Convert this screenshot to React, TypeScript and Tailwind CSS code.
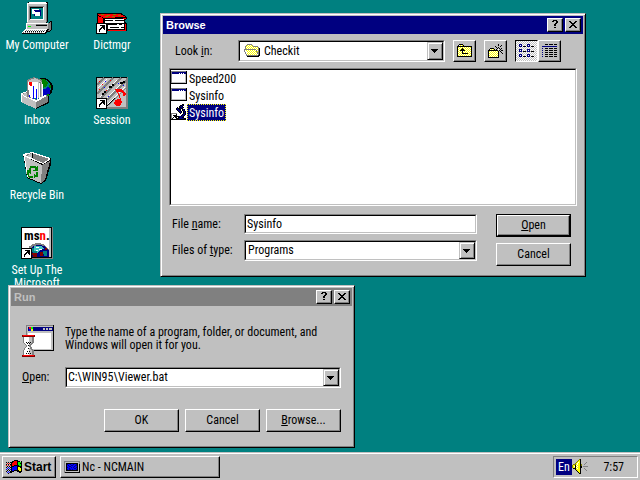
import React from "react";

const raised =
  "border border-t-white border-l-white border-r-black border-b-black bg-[#c0c0c0] shadow-[inset_-1px_-1px_0_#808080]";
const frame =
  "border border-t-[#c0c0c0] border-l-[#c0c0c0] border-r-black border-b-black bg-[#c0c0c0] shadow-[inset_1px_1px_0_#fff,inset_-1px_-1px_0_#808080]";
const sunken = "border border-t-[#808080] border-l-[#808080] border-r-white border-b-white bg-[#c0c0c0]";
const well = "border border-t-black border-l-black border-r-[#c0c0c0] border-b-[#c0c0c0] bg-white";

const palette: Record<string, string> = {
  k: "#000",
  w: "#fff",
  g: "#808080",
  c: "#c0c0c0",
  n: "#000080",
  b: "#0000ff",
  y: "#ffff00",
  r: "#ff0000",
  l: "#00ff00",
  o: "#808000",
};

// "D" is a yellow/white dither
const Pixels: React.FC<{ rows: string[]; className?: string }> = ({ rows, className }) => (
  <svg
    width={rows[0].length}
    height={rows.length}
    shapeRendering="crispEdges"
    className={`shrink-0 ${className ?? ""}`}
    aria-hidden="true"
  >
    {rows.flatMap((row, y) =>
      row.split("").map((ch, x) => {
        if (ch === ".") return null;
        const fill = ch === "D" ? ((x + y) % 2 ? "#fff" : "#ffff00") : palette[ch];
        return <rect key={`${x}-${y}`} x={x} y={y} width={1} height={1} fill={fill} />;
      })
    )}
  </svg>
);

const folderOpen = [
  "...ggggg........",
  "..gDDDDDg.......",
  ".gDDDDDDDggggg..",
  ".gwDDDDDDDDDDDg.",
  ".gDDDDDDDDDDDDgk",
  "ggggggggggggDDgk",
  "gwDwDwDwDwDwgDgk",
  "gwDDDDDDDDDDgDgk",
  ".gwDDDDDDDDDDggk",
  ".gDDDDDDDDDDDggk",
  "..gDDDDDDDDDDDgk",
  "..ggggggggggggkk",
  "...kkkkkkkkkkkk.",
  "................",
];
const folderUp = [
  "..kkkk.........",
  ".kDDDDk........",
  "kkkkkkkkkkkkkkk",
  "kDDDDDDDDDDDDDk",
  "kDDDDkDDDDDDDDk",
  "kDDDkkkDDDDDDDk",
  "kDDkkkkkDDDDDDk",
  "kDDDDkDDDDDDDDk",
  "kDDDDkDDDDDDDDk",
  "kDDDDkkkkkkDDDk",
  "kDDDDDDDDDDDDDk",
  "kDDDDDDDDDDDDDk",
  "kkkkkkkkkkkkkkk",
  "...............",
];
const folderNew = [
  "..........k....",
  "..........k..k.",
  ".......k....k..",
  "........k.k....",
  "..kkkk...k.k.k.",
  ".kDDDDk.k.w.k..",
  "kkkkkkkkkk.k.kk",
  "kDDDDDDDDDk.k..",
  "kDDDDDDDDDk..k.",
  "kDDDDDDDDDk...k",
  "kDDDDDDDDDk....",
  "kDDDDDDDDDk....",
  "kDDDDDDDDDk....",
  "kkkkkkkkkkk....",
];
const listView = [
  "nnn.....nnn....",
  "nwn.....nwn....",
  "nnn.kkk.nnn.kkk",
  "...............",
  "...............",
  "nnn.....nnn....",
  "nwn.....nwn....",
  "nnn.kkk.nnn.kkk",
  "...............",
  "...............",
  "nnn.....nnn....",
  "nwn.....nwn....",
  "nnn.kkk.nnn.kkk",
  "...............",
];
const detailView = [
  "...kkk.kkkk.kkk",
  "...............",
  "nnnnnnnnnnnnnnn",
  "...............",
  "n..kkk.kkkk.kkk",
  "...............",
  "n..kkk.kkkk.kkk",
  "...............",
  "n..kkk.kkkk.kkk",
  "...............",
  "n..kkk.kkkk.kkk",
  "...............",
  "n..kkk.kkkk.kkk",
  "...............",
];
const program = [
  "gggggggggggggggk",
  "gnnnnnnnnnnnnnnk",
  "gnnnnnnnwnwnwnnk",
  "gwwwwwwwwwwwwwck",
  "gwwwwwwwwwwwwwck",
  "gwwwwwwwwwwwwwck",
  "gwwwwwwwwwwwwwck",
  "gwwwwwwwwwwwwwck",
  "gwwwwwwwwwwwwwck",
  "gwwwwwwwwwwwwwck",
  "gwwwwwwwwwwwwwck",
  "gcccccccccccccck",
  "kkkkkkkkkkkkkkkk",
  "................",
  "................",
];
const microscope = [
  "...........kk...",
  ".........kknk...",
  "........knnk....",
  "......k.kknnk...",
  ".....knkknkk....",
  ".....knnkk.knk..",
  "......knnk.knk..",
  ".......knnk.knk.",
  "........knk.knk.",
  "gggggg...k..knk.",
  "gwwwwk.....knnk.",
  "gwkkkk....knnk..",
  "gwwkkkkknnnnk...",
  "gwkwkk.kknnkk...",
  "gkwwwkkknnnnnkk.",
  "kkkkkkkkkkkkkkk.",
];
const flag = [
  "........kkkk....",
  "......kkrrrkkk.k",
  "k.k.kkkrrrrklllk",
  ".r.r.krrrrrkllkk",
  "k.k.kkrrrrrklllk",
  "r.r.rkrrkkkkkllk",
  ".k.k.kkkbbbkkkkk",
  "k.b.kkbbbbbkyykk",
  ".b.b.kbbbbbkyyyk",
  "b.k.bkbbbbbkyyyk",
  ".k.k.kbbkkkkkyyk",
  "k.b.kkkk...kkkkk",
  ".b.bkk.......kk.",
  "..k.............",
];
const consoleIcon = [
  "gggggggggggggggg",
  "gccccccccccccccg",
  "gckkkkkkkkkkkkcg",
  "gcknbbnbbnbbnkck",
  "gckbnbbnnbbnnkck",
  "gckbbnnbbbnbbkck",
  "gcknbbbnbnbbnkck",
  "gckbbnbbbbnnbkck",
  "gcknbnnbnbbbnkck",
  "gckkkkkkkkkkkkck",
  "gcccccccccccccck",
  "gkkkkkkkkkkkkkkk",
];
const speaker = [
  ".......ok.......",
  "......oyk.......",
  ".....oyyk.......",
  "....oywyk.....g.",
  "...oywyyk....g..",
  ".oooywyyko..g...",
  "oyykwyyyko......",
  "oywkywyykk.ggggg",
  "oyykwyyykk......",
  ".kkkywyyk...g...",
  "...kyyyyk....g..",
  "....kyyyk.....g.",
  ".....kyyk.......",
  "......kyk.......",
  ".......kk.......",
  "................",
];
const question = [
  ".kkkk.",
  "kk..kk",
  "....kk",
  "...kk.",
  "..kk..",
  "..kk..",
  "......",
  "..kk..",
  "......",
  "......",
];
const cross = [
  "kk....kk",
  ".kk..kk.",
  "..kkkk..",
  "...kk...",
  "..kkkk..",
  ".kk..kk.",
  "kk....kk",
  "........",
];
const arrowDown = ["kkkkkkk.", ".kkkkk..", "..kkk...", "...k...."];

const Big: React.FC<{ children: React.ReactNode }> = ({ children }) => (
  <svg width="32" height="32" viewBox="0 0 32 32" shapeRendering="crispEdges" className="shrink-0" aria-hidden="true">
    {children}
  </svg>
);

const ShortcutMark = () => (
  <>
    <path d="M0 21h11v11H0z" fill="#000" />
    <path d="M1 22h9v9H1z" fill="#fff" />
    <path d="M4 23h5v5h-1v-1h-1v-1h-1v1h-1v1h-1v2h-1v-3h1v-1h1v-1h1v-1H4z" fill="#000" />
  </>
);

const ComputerIcon = () => (
  <Big>
    <g transform="translate(1 0)">
      <path d="M5 1l2-1h18l1 1v18l-2 3H5z" fill="#000" />
      <path d="M5 1h19v20H5z" fill="#c0c0c0" />
      <path d="M7 0h17v1h1v1H6v18H5V1h2z" fill="#fff" />
      <path d="M24 2h1v18h-1z" fill="#808080" />
      <path d="M7 4h15v14H7z" fill="#808080" />
      <path d="M8 5h13v12H8z" fill="#000" />
      <path d="M9 6h12v11H9z" fill="#008080" />
      <path d="M21 5h1v13H8v-1h13z" fill="#fff" />
      <path d="M10 7h7v5h-7z" fill="#fff" />
      <path d="M12 8h7v6h-7z" fill="#000080" />
      <path d="M13 10h5v4h-5zM11 9h2v3h-2z" fill="#fff" />
      <path d="M4 21h22l3-2 1 1v7l-3 3H4z" fill="#000" />
      <path d="M4 21h22v6H4z" fill="#c0c0c0" />
      <path d="M4 21h23v1H5v5H4z" fill="#fff" />
      <path d="M26 21l3-1v7l-2 2h-1z" fill="#808080" />
      <path d="M14 22h11v1H14z" fill="#808080" />
      <path d="M14 23h11v1H14z" fill="#000" />
      <path d="M6 24h3v1H6z" fill="#00ff00" />
      <path d="M3 27h24l-3 5H0v-2z" fill="#000" />
      <path d="M3 27h22l-2 4H0v-1z" fill="#fff" />
      <path d="M4 28.500h20M1 30.500h20" stroke="#808080" strokeDasharray="1 1" />
      <path d="M3 29.500h20" stroke="#000" strokeDasharray="1 1" />
    </g>
  </Big>
);

const BookIcon = () => (
  <Big>
    <path d="M1 11h24l6 4v2l-2 1v2l2 2v7H9L1 23z" fill="#000" />
    <path d="M2 12h22l6 3-22 1-6-3z" fill="#f00" />
    <path d="M5 12h3v1H5zM11 13h3v1h-3zM17 12h3v1h-3zM22 13h3v1h-3zM9 14h3v1H9zM16 14h3v1h-3z" fill="#808000" />
    <path d="M2 14l5 2v5H2z" fill="#f00" />
    <path d="M9 17h19v4H9zM12 22h16v5H12z" fill="#fff" />
    <path d="M8 18.500h20M12 22.500h14M14 25.500h14" stroke="#000" strokeDasharray="9 2" />
    <path d="M27 16h3v1h-3zM12 28h18v1H12zM29 22h1v6h-1z" fill="#f00" />
    <ShortcutMark />
  </Big>
);

const InboxIcon = () => (
  <Big>
    <circle cx="22" cy="11" r="10" fill="#000" />
    <circle cx="21" cy="11" r="9" fill="#008080" />
    <path d="M16 2h7l4 4-1 3-4 2-2-3-3-2z" fill="#008000" />
    <path d="M21 12h3l2-2h3v6l-3 4-4 1z" fill="#0000c0" />
    <path d="M28 8h2v3h-2zM26 17h2v2h-2z" fill="#008000" />
    <path d="M6 3l7-3 8 3v17H6z" fill="#808080" />
    <path d="M7 4l7-3 6 3v1H7zM17 5h1v16h-1zM20 5h1v15h-1z" fill="#c0c0c0" />
    <path d="M7 5h10v17l-9-2z" fill="#fff" />
    <path d="M18 6h1v15h-1zM21 7h1v13h-1z" fill="#fff" />
    <path d="M8 5h3v4H9v-1H8z" fill="#f00" />
    <path d="M8 18h1v5H8zM12 9h1v13h-1zM15 12h1v10h-1z" fill="#0000ff" />
    <path d="M0 16l6-2v5l10 4 8-5 3 1v7l-12 6-15-7z" fill="#808080" />
    <path d="M0 17l6-1v4l4 2 5 2v8L0 25z" fill="#c0c0c0" />
    <path d="M0 16l6-2v1l-5 2 5 3v1L1 18v7H0zM7 20l8 3 9-5 2 1-11 6-8-4z" fill="#fff" />
    <path d="M27 19h1v7l-13 6v-1l12-6z" fill="#000" />
  </Big>
);

const SessionIcon = () => (
  <Big>
    <path d="M0 0h32v32H0z" fill="#808080" />
    <path d="M0 0h31v1H1v30H0z" fill="#000" />
    <path d="M1 1h29v29H1z" fill="#c0c0c0" />
    <path d="M1 8l7-7M1 17L17 1M5 21L25 1M11 23L30 4M13 29L30 12" stroke="#808080" strokeWidth="2" />
    <path d="M2 11l9-9M4 20L21 3M10 22L28 4M12 27L29 10" stroke="#fff" />
    <path d="M4 15L15 4M9 18L24 3" stroke="#808080" strokeDasharray="2 1" />
    <path d="M3 4h1v1H3zM6 7h1v1H6zM3 12h1v1H3zM10 13h1v1h-1zM14 3h1v1h-1z" fill="#f00" />
    <path d="M9 4h1v1H9zM8 10h1v1H8zM12 19h1v1h-1zM22 6h1v1h-1zM27 8h1v1h-1z" fill="#00f" />
    <path d="M16 7h2v2h-2v2h-3V9h3zM8 14h2v2H8v2H6v-2h2zM27 4h2v2h-2v1h-3V5h3z" fill="#000" />
    <path d="M11 30L30 12v18z" fill="#c0c0c0" />
    <path d="M11 29l8-8" stroke="#000" />
    <path d="M19 12h6l3 2 2 3-1 2h-2v-2l-2-2h-3l2 4 2 6-1 3-3 1h-2l-2-2 1-4 3-1h2l-2-5-3-5z" fill="#f00" />
    <ShortcutMark />
  </Big>
);

const RecycleIcon = () => (
  <Big>
    <g transform="translate(1 0)">
      <path d="M1 2l9-2 19 6v6l-5 17-5 3L5 26z" fill="#000" />
      <path d="M2 4l18 9-1 18L5 25z" fill="#c0c0c0" />
      <path d="M20 13l8-4-5 19-4 3z" fill="#808080" />
      <path d="M3 3l7-2 17 6-6 4z" fill="#808080" />
      <path d="M5 4l5-3v6z" fill="#c0c0c0" />
      <path d="M10 1h1v8l-1-1z" fill="#000" />
      <path d="M1 2l9-2 18 6v2l-7 4L1 4zM3 3l18 8 6-4-17-6z" fill="#fff" fillRule="evenodd" />
      <path d="M2 4l4 21" stroke="#fff" />
      <path d="M8 14h6v1h1v-1h1v5h-5v-1h2v-2H9v2H7v-2h1zM5 18h4v4H8v-1H7v3h4v2H7v-1H6v-2H5zM14 20h2v5h-3v1h-1v-4h1v1h1z" fill="#008000" />
    </g>
  </Big>
);

const MsnIcon = () => (
  <Big>
    <path d="M0 0h32v32H0z" fill="#808080" />
    <path d="M0 0h31v31H0z" fill="#000" />
    <path d="M1 1h29v29H1z" fill="#c0c0c0" />
    <path d="M1 1h27v28H1z" fill="#fff" />
    <clipPath id="globe">
      <path d="M6 16h22v14H6z" />
    </clipPath>
    <g clipPath="url(#globe)">
      <circle cx="17" cy="28" r="12" fill="#808080" />
      <circle cx="18" cy="29" r="11" fill="#000080" />
      <path d="M13 19h8l2 3-4 1-3 3-3-2z" fill="#40c0c0" />
      <path d="M9 21h4v3h3v2h-4zM22 24h4v5h-3z" fill="#008080" />
      <path d="M11 26h5v4h-4zM19 25h3v4h-3zM24 21h2v2h-2z" fill="#800000" />
      <path d="M15 20h3v1h-3zM18 22h3v1h-3zM15 23h2v1h-2z" fill="#fff" />
    </g>
    <text x="3" y="13" fontSize="13" fontWeight="bold" fontFamily="Roboto Condensed, Roboto, sans-serif">
      ms<tspan fill="#f00">n</tspan>.
    </text>
    <ShortcutMark />
  </Big>
);

const RunIcon = () => (
  <Big>
    <path d="M4 0h28v26H4z" fill="#000" />
    <path d="M4 0h27v25H4z" fill="#808080" />
    <path d="M5 1h26v24H5z" fill="#c0c0c0" />
    <path d="M6 2h25v4H6z" fill="#000080" />
    <path d="M7 2h2v2H7z" fill="#f00" />
    <path d="M9 2h2v2H9z" fill="#0f0" />
    <path d="M7 4h2v2H7z" fill="#00f" />
    <path d="M9 4h2v2H9z" fill="#ff0" />
    <path d="M21 3h2v2h-2zM24 3h2v2h-2zM27 3h3v2h-3z" fill="#c0c0c0" />
    <path d="M6 8h23v16H6z" fill="#fff" />
    <path d="M1 11h11v6l-3 4 3 5v4H1v-4l3-5-3-4z" fill="#808080" />
    <path d="M2 12h8v5l-3 4 3 5v4H2v-4l3-5-3-4z" fill="#fff" />
    <path d="M7 12h3v5l-3 3zM7 22l3 4v4H7z" fill="#c0c0c0" />
    <path d="M4 17.500h6M5 18.500h4M6 20.500h2M6 23.500h2M5 26.500h4M4 28.500h6" stroke="#000" strokeDasharray="1 1" />
    <path d="M0 10h13v2H0zM0 30h13v2H0z" fill="#800000" />
    <path d="M1 10h11v1H1zM1 30h11v1H1z" fill="#f00" />
  </Big>
);

const desktopItems = [
  { label: "My Computer", Icon: ComputerIcon },
  { label: "Inbox", Icon: InboxIcon },
  { label: "Recycle Bin", Icon: RecycleIcon },
  { label: "Set Up The Microsoft", Icon: MsnIcon },
  { label: "Dictmgr", Icon: BookIcon },
  { label: "Session", Icon: SessionIcon },
];

const TitleBar: React.FC<{ title: string; active?: boolean }> = ({ title, active }) => (
  <div
    className={`flex h-[18px] items-center gap-[2px] px-[2px] font-['Liberation_Sans'] text-[11px] font-bold ${
      active ? "bg-[#000080] text-white" : "bg-[#808080] text-[#c0c0c0]"
    }`}
  >
    <h2 className="flex-1 px-px">{title}</h2>
    <button aria-label="Help" className={`flex h-[14px] w-4 items-center justify-center ${raised}`}>
      <Pixels rows={question} />
    </button>
    <button aria-label="Close" className={`flex h-[14px] w-4 items-center justify-center ${raised}`}>
      <Pixels rows={cross} />
    </button>
  </div>
);

const PushButton: React.FC<{ children: React.ReactNode; isDefault?: boolean }> = ({ children, isDefault }) => (
  <button className={`h-[23px] w-[75px] ${isDefault ? "border border-black" : ""}`}>
    <span className={`flex h-full items-center justify-center ${raised}`}>
      <span>{children}</span>
    </span>
  </button>
);

const DropArrow = () => (
  <span className={`pointer-events-none flex w-4 shrink-0 items-center justify-center ${frame}`}>
    <Pixels rows={arrowDown} />
  </span>
);

const BrowseDialog = () => (
  <section aria-label="Browse" className={`absolute top-[13px] left-[160px] w-[426px] p-[2px] ${frame}`}>
    <TitleBar title="Browse" active />
    <div className="px-[6px] pt-[6px] pb-2">
      <div className="flex h-[22px] items-center pl-[6px]">
        <label htmlFor="look-in" className="w-[63px]">
          Look <u>i</u>n:
        </label>
        <div className={`h-full flex-1 ${sunken}`}>
          <div className={`flex h-full ${well}`}>
            <Pixels rows={folderOpen} className="ml-1 self-center" />
            <select id="look-in" className="min-w-0 flex-1 appearance-none bg-transparent pl-1 outline-none">
              <option>Checkit</option>
            </select>
            <DropArrow />
          </div>
        </div>
        <div className="mr-4 ml-2 flex h-full">
          <button aria-label="Up One Level" className={`mr-2 flex w-[23px] items-center justify-center ${raised}`}>
            <Pixels rows={folderUp} />
          </button>
          <button aria-label="Create New Folder" className={`mr-2 flex w-[23px] items-center justify-center ${raised}`}>
            <Pixels rows={folderNew} />
          </button>
          <button
            aria-label="List"
            className="flex w-[23px] items-center justify-center border border-t-black border-r-white border-b-white border-l-black bg-[repeating-conic-gradient(#fff_0_25%,#c0c0c0_0_50%)] bg-size-[2px_2px]"
          >
            <Pixels rows={listView} />
          </button>
          <button aria-label="Details" className={`flex w-[23px] items-center justify-center ${raised}`}>
            <Pixels rows={detailView} />
          </button>
        </div>
      </div>
      <div className={`mt-[6px] h-[138px] ${sunken}`}>
        <ul className={`h-full ${well}`}>
          <li className="flex h-[17px] items-center">
            <Pixels rows={program} />
            <button className="px-[2px] pt-[2px] leading-[15px]">Speed200</button>
          </li>
          <li className="flex h-[17px] items-center">
            <Pixels rows={program} />
            <button className="px-[2px] pt-[2px] leading-[15px]">Sysinfo</button>
          </li>
          <li className="flex h-[17px] items-start">
            <Pixels rows={microscope} />
            <button className="border border-dotted border-[#ffff00] bg-[#000080] px-px pt-[2px] text-white">
              Sysinfo
            </button>
          </li>
        </ul>
      </div>
      <div className="mt-2 flex items-start gap-[19px] pr-[6px] pl-[3px]">
        <div className="grid flex-1 grid-cols-[72px_1fr] items-center gap-y-[6px]">
          <label htmlFor="file-name">
            File <u>n</u>ame:
          </label>
          <div className={`h-[20px] ${sunken}`}>
            <input
              id="file-name"
              defaultValue="Sysinfo"
              className={`block h-full w-full px-px outline-none ${well}`}
            />
          </div>
          <label htmlFor="file-type">
            Files of <u>t</u>ype:
          </label>
          <div className={`h-[21px] ${sunken}`}>
            <div className={`flex h-full ${well}`}>
              <select id="file-type" className="min-w-0 flex-1 appearance-none bg-transparent pl-[2px] outline-none">
                <option>Programs</option>
              </select>
              <DropArrow />
            </div>
          </div>
        </div>
        <div className="flex flex-col gap-[6px]">
          <PushButton isDefault>
            <u>O</u>pen
          </PushButton>
          <PushButton>Cancel</PushButton>
        </div>
      </div>
    </div>
  </section>
);

const RunDialog = () => (
  <section aria-label="Run" className={`absolute top-[285px] left-2 w-[347px] p-[2px] ${frame}`}>
    <TitleBar title="Run" />
    <div className="px-[11px] pt-[19px] pb-[13px]">
      <div className="flex gap-[11px]">
        <RunIcon />
        <p className="pt-px">
          Type the name of a program, folder, or document, and
          <br />
          Windows will open it for you.
        </p>
      </div>
      <div className="mt-[10px] flex h-[21px] items-center">
        <label htmlFor="run-open" className="w-[43px]">
          <u>O</u>pen:
        </label>
        <div className={`h-full flex-1 ${sunken}`}>
          <div className={`flex h-full ${well}`}>
            <input
              id="run-open"
              defaultValue="C:\WIN95\Viewer.bat"
              className="min-w-0 flex-1 bg-transparent px-px outline-none"
            />
            <DropArrow />
          </div>
        </div>
      </div>
      <div className="mt-[21px] flex justify-end gap-[6px]">
        <PushButton>OK</PushButton>
        <PushButton>Cancel</PushButton>
        <PushButton>
          <u>B</u>rowse...
        </PushButton>
      </div>
    </div>
  </section>
);

const Taskbar = () => (
  <footer className="flex h-7 items-stretch gap-1 border-t border-[#c0c0c0] bg-[#c0c0c0] px-[2px] pt-[3px] pb-[2px] shadow-[inset_0_1px_0_#fff]">
    <button
      className={`flex w-[54px] items-center gap-[2px] pl-[3px] font-['Liberation_Sans'] text-[12px] font-bold ${raised}`}
    >
      <Pixels rows={flag} />
      Start
    </button>
    <button className={`flex w-[160px] items-center gap-[2px] pl-[3px] ${raised}`}>
      <Pixels rows={consoleIcon} />
      Nc - NCMAIN
    </button>
    <div className="ml-auto flex w-[85px] items-center border border-t-[#808080] border-r-white border-b-white border-l-[#808080] px-[2px]">
      <span className="bg-[#000080] px-[2px] leading-4 text-white">En</span>
      <Pixels rows={speaker} />
      <time className="ml-auto pr-[11px]">7:57</time>
    </div>
  </footer>
);

const App: React.FC = () => {
  return (
    <div className="flex h-screen flex-col overflow-hidden bg-[#008080] font-['Roboto_Condensed',Roboto,sans-serif] text-[12px] leading-[13px] text-black">
      <main className="relative min-h-0 flex-1">
        <div className="grid auto-cols-[75px] grid-flow-col grid-rows-[repeat(4,75px)] pt-[2px]">
          {desktopItems.map(({ label, Icon }) => (
            <button key={label} className="flex flex-col items-center justify-start gap-[5px] pr-[5px] pl-1 text-white">
              <Icon />
              <span>{label}</span>
            </button>
          ))}
        </div>
        <BrowseDialog />
        <RunDialog />
      </main>
      <Taskbar />
    </div>
  );
};

export default App;
